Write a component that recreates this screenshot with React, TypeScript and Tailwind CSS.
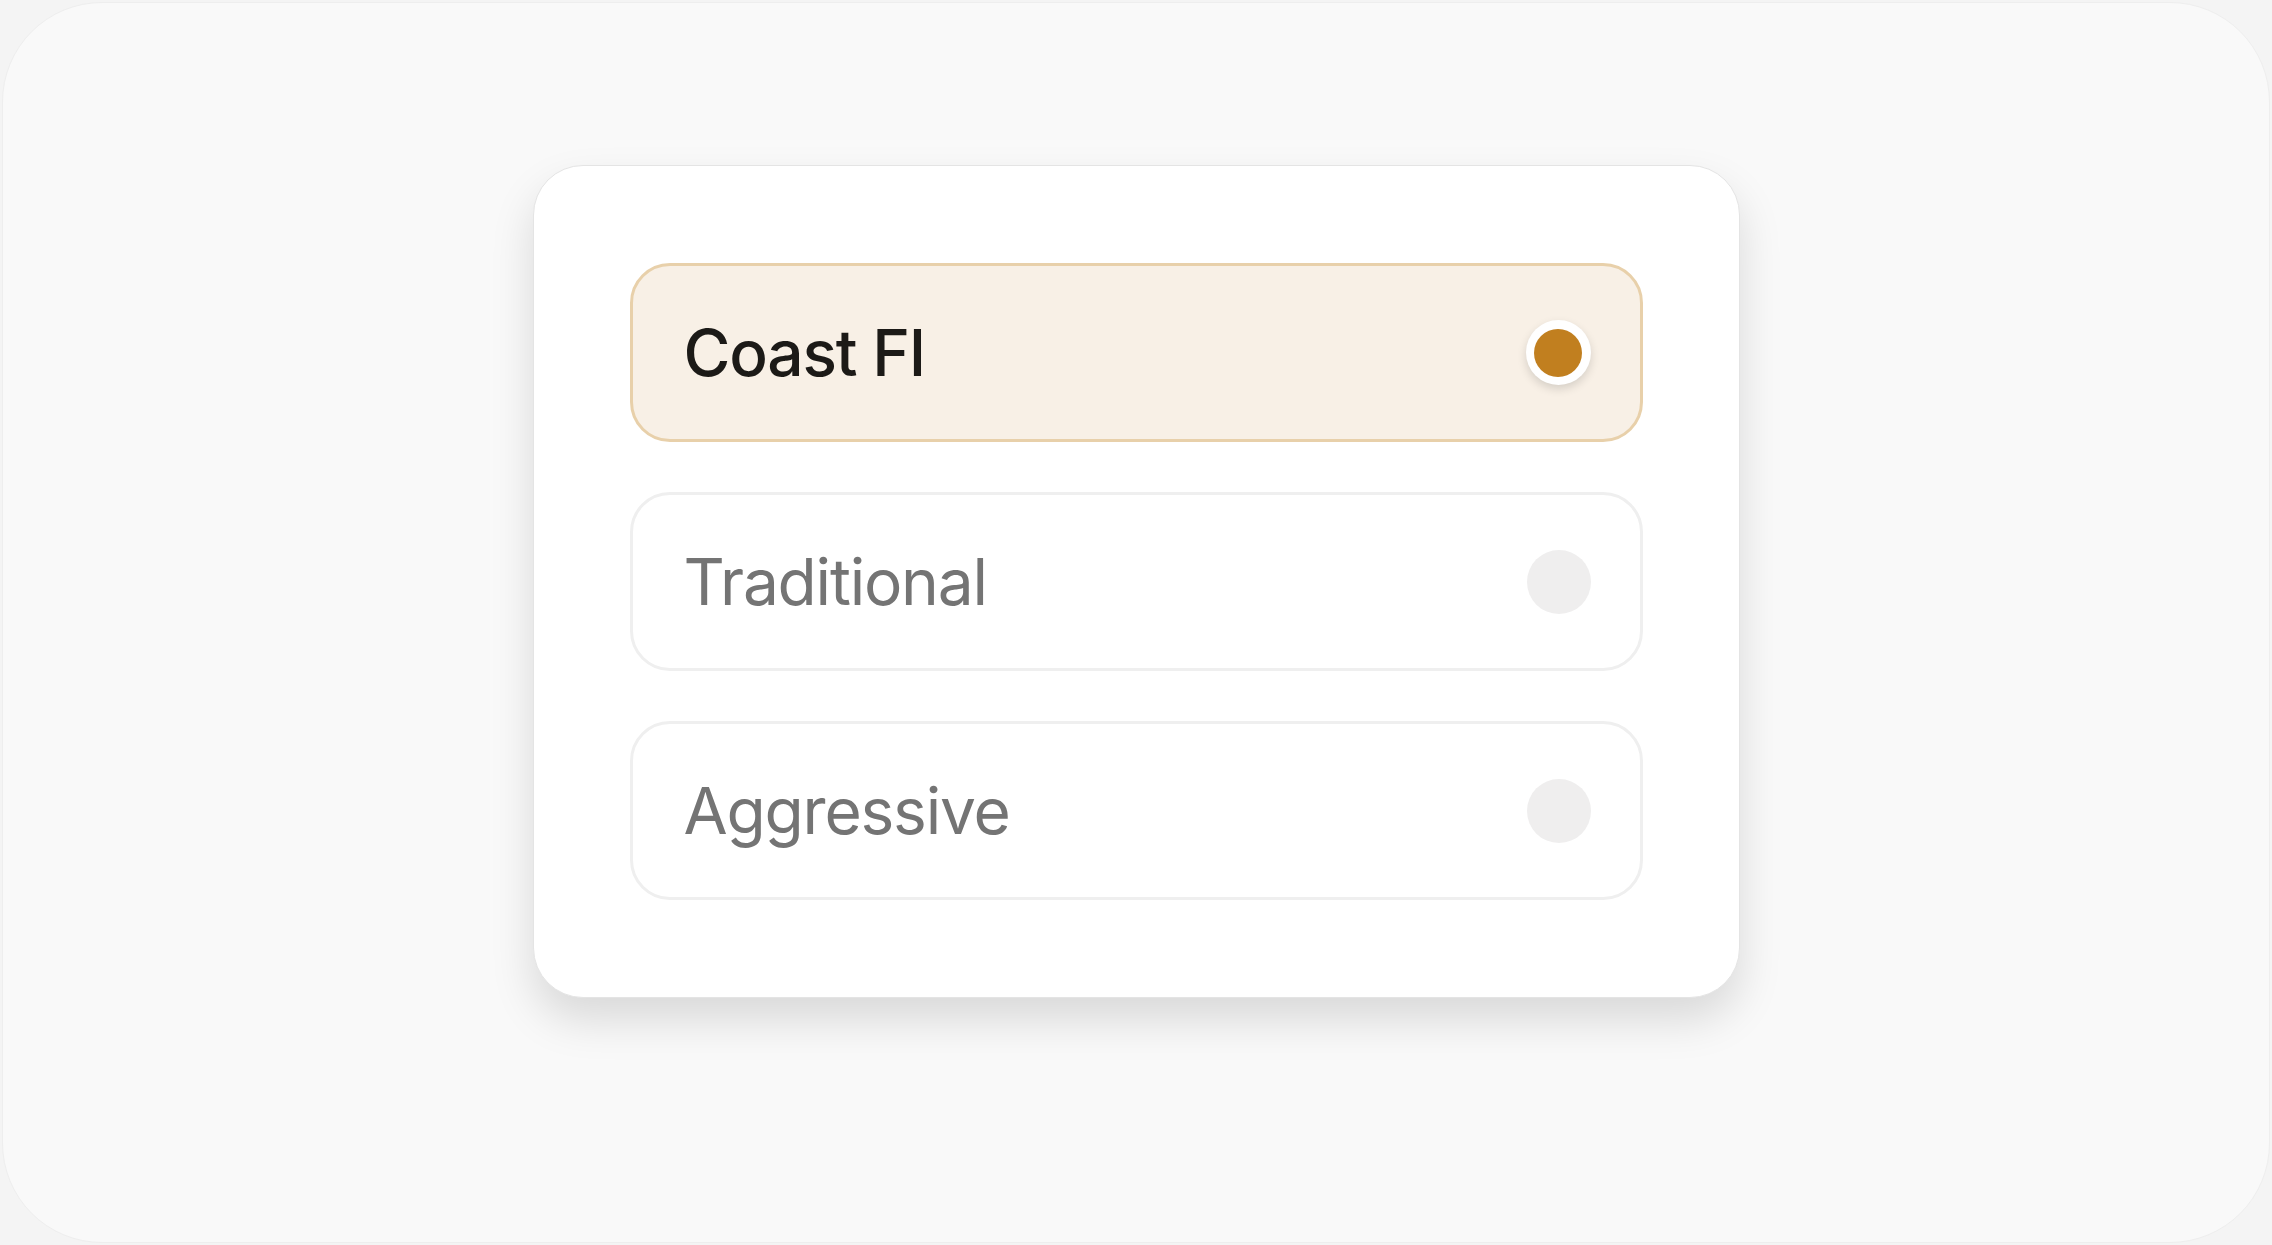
import { useState } from 'react';

const plans = ['Coast FI', 'Traditional', 'Aggressive'];

export default function App() {
    const [selected, setSelected] = useState('Coast FI');

    return (
        <div className="h-[1245px] w-[2272px] bg-[#f4f4f4] p-[2px]" style={{ fontFamily: 'Inter, "Noto Sans", sans-serif' }}>
            <div className="flex h-full w-full justify-center rounded-[100px] border border-[#eeeeee] bg-[#f9f9f9] pt-[162px]">
                <div className="h-[833px] w-[1207px] rounded-[50px] border border-[#e4e4e4] bg-white px-[96px] pt-[97px] shadow-[0_22px_44px_rgba(0,0,0,0.13)]">
                    <div className="flex flex-col gap-[50px]">
                        {plans.map((plan) => {
                            const active = plan === selected;
                            return (
                                <button
                                    key={plan}
                                    onClick={() => setSelected(plan)}
                                    className={`flex h-[179px] w-full items-center justify-between rounded-[40px] border-[3px] pl-[51px] pr-[49px] text-left ${
                                        active ? 'border-[#e8d0aa] bg-[#f8f0e6]' : 'border-[#efefef] bg-white'
                                    }`}
                                >
                                    <span
                                        className={`text-[64px] leading-none tracking-[-1.2px] ${
                                            active ? 'font-medium text-[#1c1a17]' : 'font-normal text-[#747474]'
                                        }`}
                                    >
                                        {plan}
                                    </span>
                                    {active ? (
                                        <span className="flex h-[65px] w-[65px] items-center justify-center rounded-full bg-white shadow-[0_4px_10px_rgba(0,0,0,0.14)]">
                                            <span className="h-[48px] w-[48px] rounded-full bg-[#c17f1f]" />
                                        </span>
                                    ) : (
                                        <span className="h-[64px] w-[64px] rounded-full bg-[#efeeee]" />
                                    )}
                                </button>
                            );
                        })}
                    </div>
                </div>
            </div>
        </div>
    );
}
